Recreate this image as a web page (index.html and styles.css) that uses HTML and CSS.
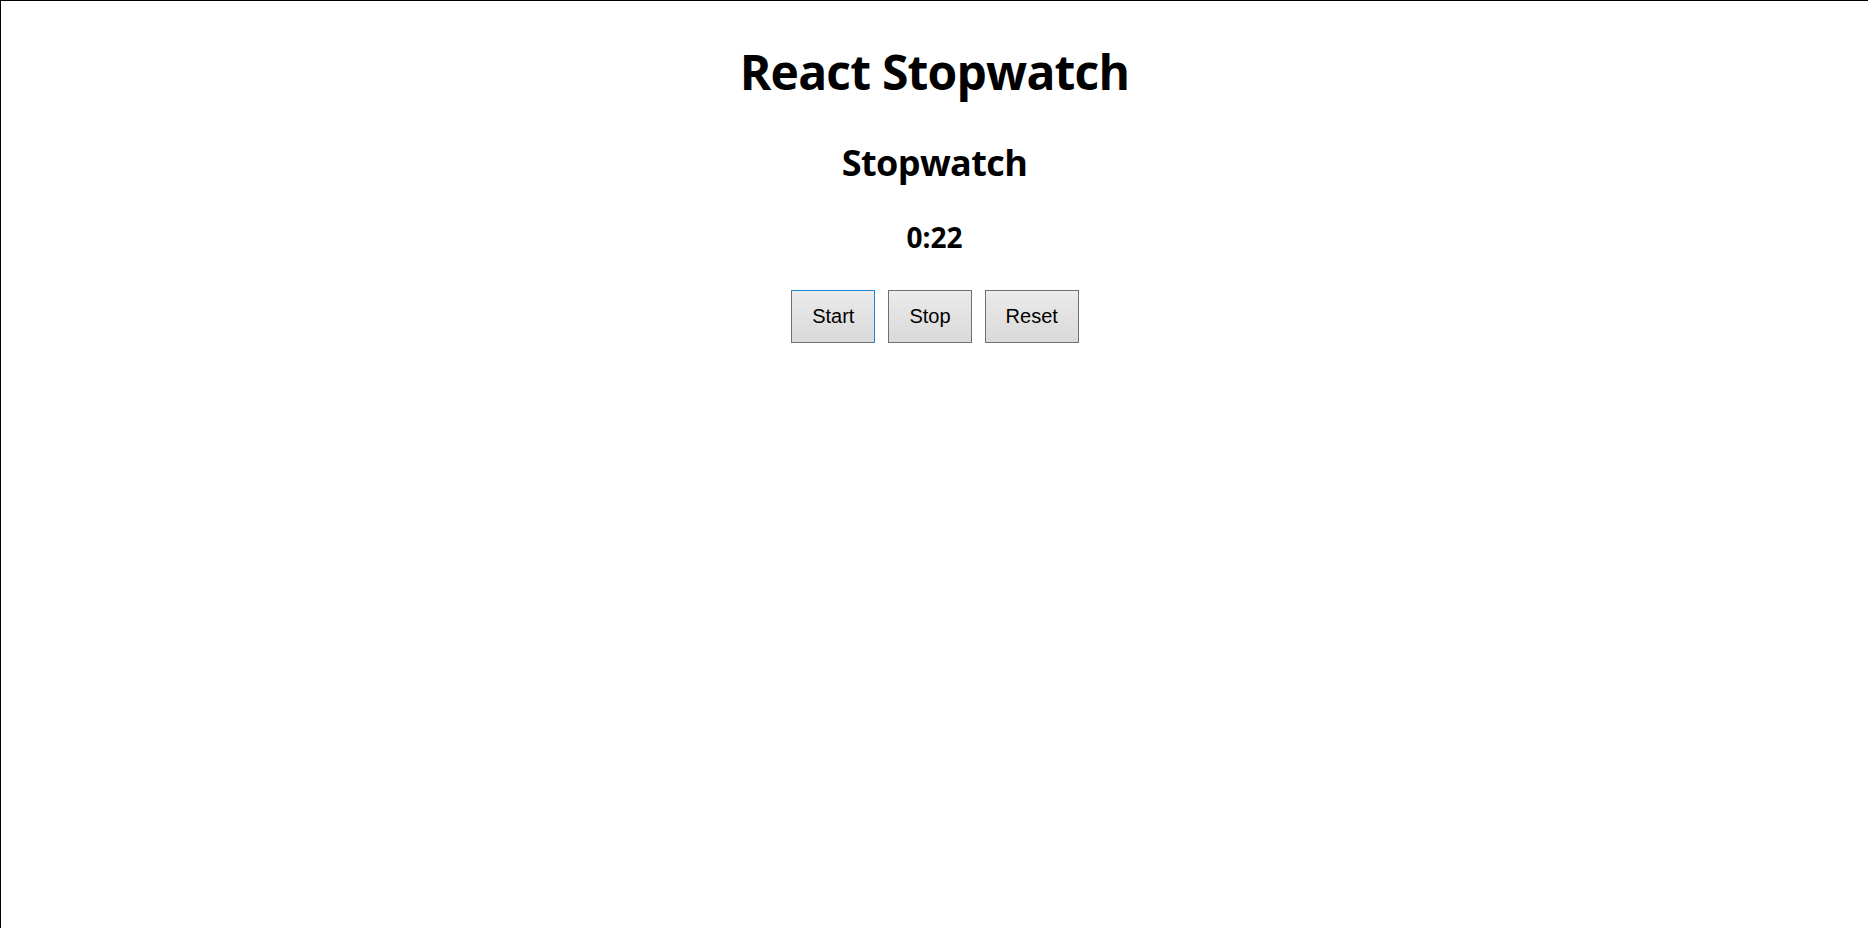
FILE: index.html
```html
<!DOCTYPE html>
<html lang="en">
<head>
<meta charset="utf-8">
<title>React Stopwatch</title>
<link rel="stylesheet" href="styles.css">
</head>
<body>
<div class="app">
  <h1 class="title">React Stopwatch</h1>
  <div class="stopwatch">
    <h2 class="subtitle">Stopwatch</h2>
    <h3 class="time">0:22</h3>
    <div class="controls">
      <button class="btn btn-focused">Start</button>
      <button class="btn">Stop</button>
      <button class="btn">Reset</button>
    </div>
  </div>
</div>
</body>
</html>
```

FILE: styles.css
```css
html, body {
  margin: 0;
  padding: 0;
  background: #ffffff;
}

body {
  box-sizing: border-box;
  min-height: 100vh;
  border-top: 1px solid #000000;
  border-left: 1px solid #000000;
  font-family: "Open Sans", "Noto Sans", sans-serif;
  color: #000000;
}

.app {
  display: flex;
  flex-direction: column;
  align-items: center;
  padding-top: 39px;
}

.title {
  margin: 0;
  font-size: 48px;
  line-height: 64px;
  font-weight: 700;
  letter-spacing: -0.8px;
}

.stopwatch {
  display: flex;
  flex-direction: column;
  align-items: center;
}

.subtitle {
  margin: 35px 0 0;
  font-size: 36px;
  line-height: 48px;
  font-weight: 700;
  letter-spacing: -0.6px;
}

.time {
  margin: 31px 0 0;
  font-size: 28px;
  line-height: 38px;
  font-weight: 700;
}

.controls {
  display: flex;
  gap: 13px;
  margin-top: 34px;
  padding-left: 1px;
}

.btn {
  font-family: "Liberation Sans", Arial, sans-serif;
  font-size: 20px;
  line-height: 23px;
  padding: 14px 20px;
  color: #000000;
  background: linear-gradient(to bottom, #ebebeb, #d9d9d9);
  border: 1px solid #707070;
  border-radius: 0;
  margin: 0;
}

.btn-focused {
  border-top-color: #1e88d4;
  border-right-color: #1e88d4;
}
```
